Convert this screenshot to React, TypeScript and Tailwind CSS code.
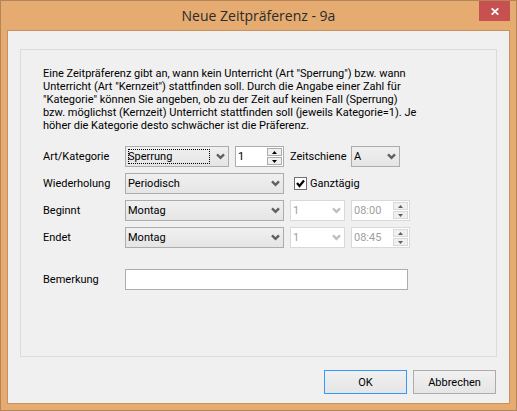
import { useState, type ReactNode } from 'react'

const FRAME = 'border border-[#acacac] bg-linear-to-b from-[#f0f0f0] to-[#e5e5e5]'

function Chevron({ className }: { className: string }) {
  return (
    <svg viewBox="0 0 9 7" className={`pointer-events-none absolute top-[7px] right-1 h-[7px] w-[9px] ${className}`} aria-hidden="true">
      <path d="M1 1.3L4.5 4.8L8 1.3" fill="none" stroke="currentColor" strokeWidth="2.4" />
    </svg>
  )
}

interface ComboProps {
  id: string
  label?: string
  options: string[]
  width: string
  disabled?: boolean
  focused?: boolean
}

function Combo({ id, label, options, width, disabled, focused }: ComboProps) {
  return (
    <div className={`relative h-[21px] ${width}`}>
      <select
        id={id}
        aria-label={label}
        disabled={disabled}
        className={`block h-full w-full appearance-none rounded-none pl-[2px] opacity-100 outline-none ${
          disabled ? 'border border-[#d9d9d9] bg-white text-[#a0a0a0]' : `${FRAME} text-black`
        }`}
      >
        {options.map((o) => (
          <option key={o}>{o}</option>
        ))}
      </select>
      {focused && <span className="pointer-events-none absolute inset-y-[3px] right-[19px] left-[3px] border border-dotted border-black" />}
      <Chevron className={disabled ? 'text-[#bfbfbf]' : 'text-[#606060]'} />
    </div>
  )
}

interface SpinnerProps {
  label: string
  initial: string
  width: string
  disabled?: boolean
}

function Spinner({ label, initial, width, disabled }: SpinnerProps) {
  const [value, setValue] = useState(initial)
  const step = (n: number) => setValue((v) => String(Math.max(1, Number(v) + n)))
  const arrow = `flex h-2 w-[15px] items-center justify-center border bg-[#f0f0f0] ${
    disabled ? 'border-[#d9d9d9] text-[#606060]' : 'border-[#acacac] text-black'
  }`
  return (
    <div className={`flex h-[21px] items-center border bg-white pr-px ${disabled ? 'border-[#d9d9d9]' : 'border-[#acacac]'} ${width}`}>
      <input
        aria-label={label}
        value={value}
        disabled={disabled}
        onChange={(e) => setValue(e.target.value)}
        className={`h-full w-full min-w-0 flex-1 pl-[2px] outline-none ${disabled ? 'text-[#a0a0a0]' : 'text-black'}`}
      />
      <div className="flex flex-col gap-px">
        <button type="button" aria-label={`${label} erhöhen`} disabled={disabled} onClick={() => step(1)} className={arrow}>
          <svg viewBox="0 0 5 3" className="h-[3px] w-[5px]" aria-hidden="true">
            <path d="M0 3L2.5 0L5 3Z" fill="currentColor" />
          </svg>
        </button>
        <button type="button" aria-label={`${label} verringern`} disabled={disabled} onClick={() => step(-1)} className={arrow}>
          <svg viewBox="0 0 5 3" className="h-[3px] w-[5px]" aria-hidden="true">
            <path d="M0 0L2.5 3L5 0Z" fill="currentColor" />
          </svg>
        </button>
      </div>
    </div>
  )
}

function Row({ label, htmlFor, children }: { label: string; htmlFor: string; children: ReactNode }) {
  return (
    <div className="flex h-[21px] items-center">
      <label htmlFor={htmlFor} className="w-[82px] shrink-0">
        {label}
      </label>
      <div className="flex min-w-0 flex-1 items-center gap-[6px]">{children}</div>
    </div>
  )
}

const DAYS = ['Montag', 'Dienstag', 'Mittwoch', 'Donnerstag', 'Freitag']

export default function App() {
  const [allDay, setAllDay] = useState(true)

  return (
    <div className="flex min-h-screen flex-col border border-[#b5855a] bg-[#e5ab70] px-[6px] pb-[6px] font-[family-name:Roboto,sans-serif] text-[11px] leading-[13px] text-black">
      <header className="relative flex h-[29px] items-center justify-center">
        <h1 className="font-[family-name:Open_Sans,sans-serif] text-[14px] text-[#2b2b2b]">Neue Zeitpräferenz - 9a</h1>
        <button type="button" aria-label="Schließen" className="absolute top-0 right-0 flex h-5 w-[31px] items-center justify-center bg-[#c75050]">
          <svg viewBox="0 0 8 7" className="h-[7px] w-2" aria-hidden="true">
            <path d="M0.7 0.3L7.3 6.7M7.3 0.3L0.7 6.7" stroke="#fff" strokeWidth="1.7" />
          </svg>
        </button>
      </header>

      <form
        onSubmit={(e) => e.preventDefault()}
        className="flex flex-1 flex-col gap-[13px] border border-[#c4935f] bg-[#f0f0f0] px-3 pt-[18px] pb-[9px]"
      >
        <div className="flex flex-1 flex-col gap-[14px] border border-[#dcdcdc] px-[22px] pt-[17px]">
          <p className="max-w-[375px]">
            Eine Zeitpräferenz gibt an, wann kein Unterricht (Art "Sperrung") bzw. wann Unterricht (Art "Kernzeit") stattfinden soll.
            Durch die Angabe einer Zahl für "Kategorie" können Sie angeben, ob zu der Zeit auf keinen Fall (Sperrung) bzw. möglichst
            (Kernzeit) Unterricht stattfinden soll (jeweils Kategorie=1). Je höher die Kategorie desto schwächer ist die Präferenz.
          </p>

          <div className="flex flex-col gap-[6px]">
            <Row label="Art/Kategorie" htmlFor="art">
              <Combo id="art" options={['Sperrung', 'Kernzeit']} width="w-[104px]" focused />
              <Spinner label="Kategorie" initial="1" width="w-[49px]" />
              <label htmlFor="zeitschiene" className="w-[55px]">
                Zeitschiene
              </label>
              <Combo id="zeitschiene" options={['A', 'B']} width="w-[49px]" />
            </Row>
            <Row label="Wiederholung" htmlFor="wiederholung">
              <Combo id="wiederholung" options={['Periodisch', 'Einmalig']} width="w-[159px]" />
              <label className="flex items-center gap-[3px] pl-1">
                <span className="relative flex">
                  <input
                    type="checkbox"
                    checked={allDay}
                    onChange={(e) => setAllDay(e.target.checked)}
                    className="size-[13px] appearance-none border border-[#707070] bg-white"
                  />
                  {allDay && (
                    <svg viewBox="0 0 13 13" className="pointer-events-none absolute inset-0 size-[13px]" aria-hidden="true">
                      <path d="M3 6L5.5 9L10 3.5" fill="none" stroke="#000" strokeWidth="2.2" />
                    </svg>
                  )}
                </span>
                Ganztägig
              </label>
            </Row>
            <Row label="Beginnt" htmlFor="beginnt">
              <Combo id="beginnt" options={DAYS} width="w-[159px]" />
              <Combo id="beginnt-stunde" label="Beginnt Stunde" options={['1', '2']} width="w-[55px]" disabled={allDay} />
              <Spinner label="Beginnt Uhrzeit" initial="08:00" width="w-[59px]" disabled={allDay} />
            </Row>
            <Row label="Endet" htmlFor="endet">
              <Combo id="endet" options={DAYS} width="w-[159px]" />
              <Combo id="endet-stunde" label="Endet Stunde" options={['1', '2']} width="w-[55px]" disabled={allDay} />
              <Spinner label="Endet Uhrzeit" initial="08:45" width="w-[59px]" disabled={allDay} />
            </Row>
            <div className="pt-[15px]">
              <Row label="Bemerkung" htmlFor="bemerkung">
                <input id="bemerkung" type="text" className="h-[21px] w-[283px] border border-[#abadb3] bg-white px-[3px] outline-none" />
              </Row>
            </div>
          </div>
        </div>

        <div className="flex justify-end gap-[6px] pr-px">
          <button type="submit" className="h-6 w-[83px] border border-[#3399ff] bg-linear-to-b from-[#f0f0f0] to-[#e5e5e5]">
            OK
          </button>
          <button type="button" className={`h-6 w-[83px] ${FRAME}`}>
            Abbrechen
          </button>
        </div>
      </form>
    </div>
  )
}
